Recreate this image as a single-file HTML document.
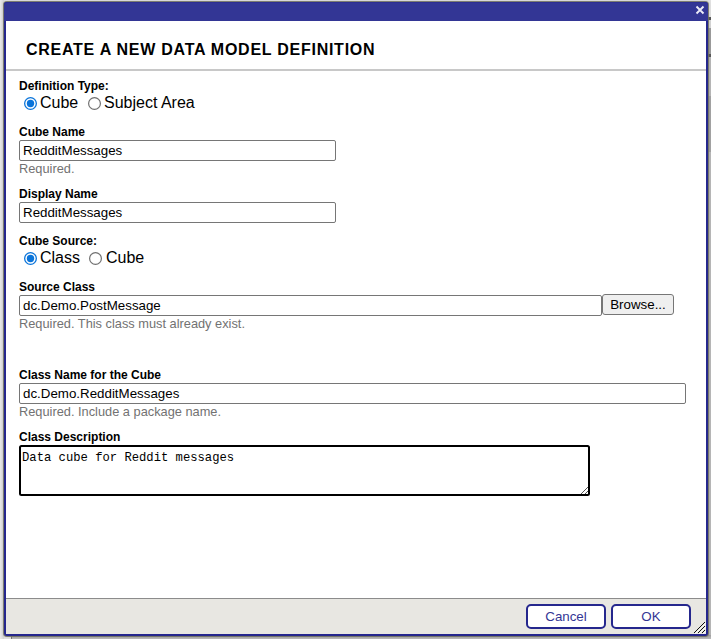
<!DOCTYPE html>
<html>
<head>
<meta charset="utf-8">
<title>Create a New Data Model Definition</title>
<style>
*{box-sizing:border-box;}
html,body{margin:0;padding:0;}
body{width:711px;height:639px;overflow:hidden;background:#e2e2e2;font-family:"Liberation Sans",sans-serif;color:#000;position:relative;}
.bgl{position:absolute;left:0;top:0;width:4px;height:639px;background:linear-gradient(to right,#eaeaea,#d4d4d4);}
.bgr{position:absolute;left:707px;top:0;width:4px;height:639px;background:linear-gradient(to bottom,#e2e2e2 0,#e2e2e2 17px,#585858 17px,#585858 20px,#d6d6d6 20px,#d6d6d6 28px,#9c9c9c 28px,#9c9c9c 54px,#585858 54px,#585858 57px,#b8b8b8 57px,#b8b8b8 96px,#a4a4a4 96px,#a4a4a4 152px,#b8b8b8 152px);}
.bgb{position:absolute;left:11px;top:635px;width:700px;height:4px;background:linear-gradient(to bottom,#a0a0a0,#bcbcbc);border-left:1px solid #777;}
.dlg{position:absolute;left:4px;top:2px;width:704px;height:634px;background:#fff;border:2px solid #25278d;border-radius:3px;box-shadow:0 0 0 1px rgba(110,110,98,.85),0 0 3px 1px rgba(0,0,0,.12);}
.tb{position:absolute;left:-2px;top:-2px;width:704px;height:19px;background:#333695;border-radius:3px 3px 0 0;border-top:1px solid #2d2f93;}
.x{position:absolute;left:689px;top:1px;}
.abs{position:absolute;white-space:nowrap;}
.title{left:20px;top:37px;font-size:16px;font-weight:bold;letter-spacing:.74px;line-height:18px;color:#000;}
.sep{position:absolute;left:0;top:65px;width:700px;height:2px;background:#c8c8c8;}
.lbl{font-size:12px;font-weight:bold;line-height:14px;left:13px;}
.hint{font-size:12.8px;line-height:15px;left:13px;color:#727272;}
.rtxt{font-size:16px;line-height:18px;}
.inp{position:absolute;left:13px;height:21px;border:1px solid #767676;border-radius:2px;background:#fff;font-size:13.333px;line-height:15px;padding:2px 3px;white-space:nowrap;}
.rad{position:absolute;}
.btn{position:absolute;left:596px;top:290px;width:72px;height:21px;border:1px solid #767676;border-radius:3px;background:#efefef;font-size:13.333px;line-height:15px;text-align:center;padding-top:2px;}
.ta{position:absolute;left:13px;top:441px;width:571px;height:51px;border:2px solid #000;border-radius:2.5px;background:#fff;font-family:"Liberation Mono",monospace;font-size:12.2px;line-height:15px;padding:3.5px 1px;white-space:pre;}
.foot{position:absolute;left:0;top:594px;width:700px;height:36px;background:#e8e7e2;border-top:1px solid #8c8c8c;}
.fb{position:absolute;top:5px;width:80px;height:25px;border:2px solid #25278d;border-radius:5px;background:#fff;color:#333695;font-size:13.333px;line-height:15px;text-align:center;padding-top:3px;}
</style>
</head>
<body>
<div class="bgl"></div><div class="bgr"></div><div class="bgb"></div>
<div class="dlg">
  <div class="tb"></div>
  <svg class="x" width="10" height="10" viewBox="0 0 10 10"><path d="M1.5 1.5 L8.5 8.5 M8.5 1.5 L1.5 8.5" stroke="#ececf7" stroke-width="1.9" stroke-linecap="butt" fill="none"/></svg>

  <div class="abs title">CREATE A NEW DATA MODEL DEFINITION</div>
  <div class="sep"></div>

  <div class="abs lbl" style="top:75px;">Definition Type:</div>
  <svg class="rad" width="13" height="13" viewBox="0 0 13 13" style="left:18px;top:93px;"><circle cx="6.5" cy="6.5" r="5.85" fill="#fff" stroke="#0a74da" stroke-width="1.3"/><circle cx="6.5" cy="6.5" r="3.7" fill="#0a74da"/></svg>
  <div class="abs rtxt" style="left:34px;top:90px;">Cube</div>
  <svg class="rad" width="13" height="13" viewBox="0 0 13 13" style="left:82px;top:93px;"><circle cx="6.5" cy="6.5" r="5.9" fill="#fff" stroke="#707070" stroke-width="1.2"/></svg>
  <div class="abs rtxt" style="left:98px;top:90px;">Subject Area</div>

  <div class="abs lbl" style="top:121px;">Cube Name</div>
  <div class="inp" style="top:136px;width:317px;">RedditMessages</div>
  <div class="abs hint" style="top:157px;">Required.</div>

  <div class="abs lbl" style="top:183px;">Display Name</div>
  <div class="inp" style="top:198px;width:317px;">RedditMessages</div>

  <div class="abs lbl" style="top:230px;">Cube Source:</div>
  <svg class="rad" width="13" height="13" viewBox="0 0 13 13" style="left:18px;top:248px;"><circle cx="6.5" cy="6.5" r="5.85" fill="#fff" stroke="#0a74da" stroke-width="1.3"/><circle cx="6.5" cy="6.5" r="3.7" fill="#0a74da"/></svg>
  <div class="abs rtxt" style="left:34px;top:245px;">Class</div>
  <svg class="rad" width="13" height="13" viewBox="0 0 13 13" style="left:83px;top:248px;"><circle cx="6.5" cy="6.5" r="5.9" fill="#fff" stroke="#707070" stroke-width="1.2"/></svg>
  <div class="abs rtxt" style="left:100px;top:245px;">Cube</div>

  <div class="abs lbl" style="top:276px;">Source Class</div>
  <div class="inp" style="top:291px;width:583px;">dc.Demo.PostMessage</div>
  <div class="btn">Browse...</div>
  <div class="abs hint" style="top:312px;">Required. This class must already exist.</div>

  <div class="abs lbl" style="top:364px;">Class Name for the Cube</div>
  <div class="inp" style="top:379px;width:667px;">dc.Demo.RedditMessages</div>
  <div class="abs hint" style="top:400px;">Required. Include a package name.</div>

  <div class="abs lbl" style="top:426px;">Class Description</div>
  <div class="ta">Data cube for Reddit messages<svg width="8" height="8" viewBox="0 0 8 8" style="position:absolute;right:0;bottom:0;"><path d="M1 8 L8 1 M5 8 L8 5" stroke="#555" stroke-width="1" fill="none"/></svg></div>

  <div class="foot">
    <div class="fb" style="left:520px;">Cancel</div>
    <div class="fb" style="left:605px;">OK</div>
    <svg class="grip" width="12" height="12" viewBox="0 0 12 12" shape-rendering="crispEdges" style="position:absolute;left:688px;top:23px;"><rect x="0" y="10" width="1" height="1" fill="#111"/><rect x="1" y="11" width="1" height="1" fill="#fbfbf3"/><rect x="1" y="9" width="1" height="1" fill="#111"/><rect x="2" y="10" width="1" height="1" fill="#fbfbf3"/><rect x="2" y="8" width="1" height="1" fill="#111"/><rect x="3" y="9" width="1" height="1" fill="#fbfbf3"/><rect x="3" y="7" width="1" height="1" fill="#111"/><rect x="4" y="8" width="1" height="1" fill="#fbfbf3"/><rect x="4" y="6" width="1" height="1" fill="#111"/><rect x="5" y="7" width="1" height="1" fill="#fbfbf3"/><rect x="5" y="5" width="1" height="1" fill="#111"/><rect x="6" y="6" width="1" height="1" fill="#fbfbf3"/><rect x="6" y="4" width="1" height="1" fill="#111"/><rect x="7" y="5" width="1" height="1" fill="#fbfbf3"/><rect x="7" y="3" width="1" height="1" fill="#111"/><rect x="8" y="4" width="1" height="1" fill="#fbfbf3"/><rect x="8" y="2" width="1" height="1" fill="#111"/><rect x="9" y="3" width="1" height="1" fill="#fbfbf3"/><rect x="9" y="1" width="1" height="1" fill="#111"/><rect x="10" y="2" width="1" height="1" fill="#fbfbf3"/><rect x="10" y="0" width="1" height="1" fill="#111"/><rect x="11" y="1" width="1" height="1" fill="#fbfbf3"/><rect x="4" y="10" width="1" height="1" fill="#111"/><rect x="5" y="11" width="1" height="1" fill="#fbfbf3"/><rect x="5" y="9" width="1" height="1" fill="#111"/><rect x="6" y="10" width="1" height="1" fill="#fbfbf3"/><rect x="6" y="8" width="1" height="1" fill="#111"/><rect x="7" y="9" width="1" height="1" fill="#fbfbf3"/><rect x="7" y="7" width="1" height="1" fill="#111"/><rect x="8" y="8" width="1" height="1" fill="#fbfbf3"/><rect x="8" y="6" width="1" height="1" fill="#111"/><rect x="9" y="7" width="1" height="1" fill="#fbfbf3"/><rect x="9" y="5" width="1" height="1" fill="#111"/><rect x="10" y="6" width="1" height="1" fill="#fbfbf3"/><rect x="10" y="4" width="1" height="1" fill="#111"/><rect x="11" y="5" width="1" height="1" fill="#fbfbf3"/><rect x="8" y="10" width="1" height="1" fill="#111"/><rect x="9" y="11" width="1" height="1" fill="#fbfbf3"/><rect x="9" y="9" width="1" height="1" fill="#111"/><rect x="10" y="10" width="1" height="1" fill="#fbfbf3"/><rect x="10" y="8" width="1" height="1" fill="#111"/><rect x="11" y="9" width="1" height="1" fill="#fbfbf3"/></svg>
  </div>
</div>
</body>
</html>
